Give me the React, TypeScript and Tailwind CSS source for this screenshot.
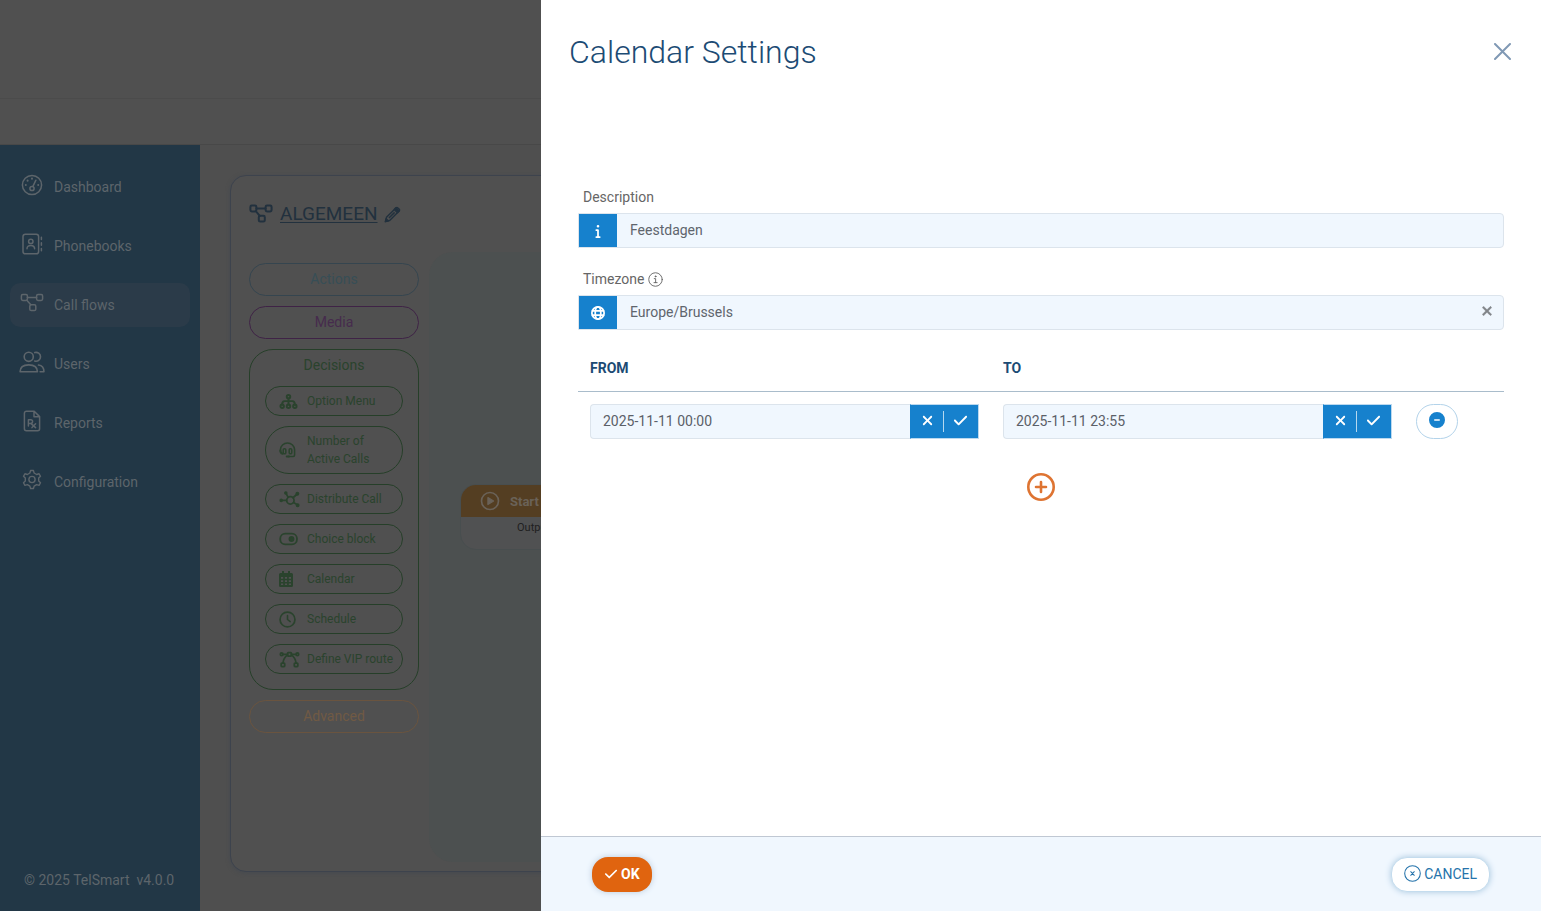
import React, { useState } from 'react';
import { FaCheck, FaCircleMinus, FaInfo, FaXmark } from 'react-icons/fa6';

interface IconProps {
  className?: string;
  children?: React.ReactNode;
}

const LineIcon: React.FC<IconProps> = ({ className = 'h-6 w-6', children }) => (
  <svg
    className={className}
    viewBox="0 0 24 24"
    fill="none"
    stroke="currentColor"
    strokeWidth={1.5}
    strokeLinecap="round"
    strokeLinejoin="round"
    aria-hidden="true"
  >
    {children}
  </svg>
);

const GaugeIcon = () => (
  <LineIcon>
    <circle cx="12" cy="12" r="9.6" />
    <circle cx="12" cy="15.5" r="2.1" />
    <path d="M12.9 13.4l3-6.2" />
    <path d="M12 5.6v.1M7.6 7.6v.1M5.8 12v.1M18.2 12v.1" strokeWidth={2} />
  </LineIcon>
);

const AddressBookIcon = () => (
  <LineIcon>
    <rect x="3" y="2.2" width="15.6" height="19.6" rx="2.4" />
    <circle cx="10.8" cy="9.4" r="2.2" />
    <path d="M7 16.8c0-2.2 1.5-3.4 3.8-3.4s3.8 1.2 3.8 3.4M21.4 5.2v2.4M21.4 10.8v2.4M21.4 16.4v2.4" />
  </LineIcon>
);

const FlowIcon: React.FC<IconProps> = ({ className }) => (
  <LineIcon className={className}>
    <rect x="1.4" y="3.6" width="6" height="5.8" rx="1.4" />
    <rect x="16.6" y="3.6" width="6" height="5.8" rx="1.4" />
    <rect x="9.8" y="13.8" width="6" height="5.8" rx="1.4" />
    <path d="M7.4 6.5h9.2M6.8 9.2l4 4.6" />
  </LineIcon>
);

const UsersIcon = () => (
  <LineIcon className="h-[26px] w-[26px]">
    <circle cx="9" cy="7.2" r="4.2" />
    <path d="M1 21c0-4 3-6.4 8-6.4s8 2.4 8 6.4zM14.5 3.3a4.1 4.1 0 1 1 0 7.8M18 14.8c3.2.4 5 2.6 5 6.2h-3.5" />
  </LineIcon>
);

const ReportIcon = () => (
  <LineIcon>
    <path d="M6.4 2.2h7.8l5.4 5.4v12.2a2 2 0 0 1-2 2H6.4a2 2 0 0 1-2-2V4.2a2 2 0 0 1 2-2zM14 2.4v5.4h5.4" />
    <path d="M8.4 17v-6.2h2.4a1.8 1.8 0 0 1 0 3.6H8.4M10.8 14.4l4.8 4.2M15.6 14.8l-3.6 3.8" />
  </LineIcon>
);

const GearIcon = () => (
  <LineIcon className="h-[22px] w-[22px]">
    <path d="M9.7 4.4l.7-2.7h3.2l.7 2.7 2.7 1.6 2.7-.8 1.6 2.8-2 1.9v3.2l2 1.9-1.6 2.8-2.7-.8-2.7 1.6-.7 2.7h-3.2l-.7-2.7L7 17l-2.7.8L2.7 15l2-1.9V9.9L2.7 8l1.6-2.8L7 6z" />
    <circle cx="12" cy="11.5" r="3.4" />
  </LineIcon>
);

const PencilIcon = () => (
  <svg className="h-[17px] w-[17px]" viewBox="0 0 24 24" fill="none" stroke="currentColor" strokeWidth={2} strokeLinejoin="round" aria-hidden="true">
    <path d="M2 22l1.5-6L16.8 2.7a2 2 0 0 1 2.8 0l1.7 1.7a2 2 0 0 1 0 2.8L8 20.5z" />
    <path d="M14.5 5l4.5 4.5 2.5-2.3-4.7-4.7zM2 22l1-4 3 3zM15 9l-8 8" fill="currentColor" />
  </svg>
);

const SitemapIcon = () => (
  <LineIcon className="h-[19px] w-[19px]">
    <g strokeWidth={2.4}>
      <circle cx="12" cy="6" r="2.2" />
      <circle cx="4" cy="18" r="2.2" />
      <circle cx="12" cy="18" r="2.2" />
      <circle cx="20" cy="18" r="2.2" />
      <path d="M12 8v8M4 16c0-3 1-4.5 3-4.5h10c2 0 3 1.5 3 4.5" />
    </g>
  </LineIcon>
);

const HeadsetIcon = () => (
  <LineIcon className="h-[17px] w-[17px]">
    <g strokeWidth={2.2}>
      <path d="M2 13v-2a10 9.5 0 0 1 20 0v7.5a2 2 0 0 1-2 2h-7" />
      <rect x="6" y="9.5" width="3.6" height="7" rx="1.5" />
      <rect x="14.4" y="9.5" width="3.6" height="7" rx="1.5" />
      <path d="M2 12c0 2.5 1 4 3 4.5M11 20.5h3" strokeWidth={3} />
    </g>
  </LineIcon>
);

const DistributeIcon = () => (
  <LineIcon className="h-[21px] w-[21px]">
    <g strokeWidth={2}>
      <circle cx="13" cy="13" r="4.2" />
      <path d="M2.5 13h6M10.5 9.5L8 5M16 10l4.5-4M16.5 15.5L21 18" />
    </g>
    <g fill="currentColor">
      <circle cx="2.5" cy="13" r="1.3" />
      <circle cx="7.8" cy="4.5" r="1.3" />
      <circle cx="21" cy="5.5" r="1.5" />
      <circle cx="21.3" cy="18.5" r="1.5" />
    </g>
  </LineIcon>
);

const ToggleIcon = () => (
  <LineIcon className="h-5 w-5">
    <rect x="1.5" y="5.5" width="20" height="13" rx="6" strokeWidth={2.2} />
    <circle cx="15" cy="12" r="2.8" fill="currentColor" />
  </LineIcon>
);

const CalendarIcon = () => (
  <svg className="h-4 w-3.5" viewBox="0 0 14 16" fill="currentColor" fillRule="evenodd" aria-hidden="true">
    <path d="M3 0h2v2h4V0h2v2h1.5A1.5 1.5 0 0 1 14 3.5v11a1.5 1.5 0 0 1-1.5 1.5h-11A1.5 1.5 0 0 1 0 14.5v-11A1.5 1.5 0 0 1 1.5 2H3zM2 6v1.7h2.2V6zm3.900 0v1.7h2.200V6zM9.800 6v1.700H12V6zM2 9.200v1.700h2.200V9.200zm3.900 0v1.700h2.200V9.200zm3.900 0v1.700H12V9.200zM2 12.400v1.600h2.200v-1.600zm3.900 0v1.600h2.200v-1.600zm3.900 0v1.600H12v-1.600z" />
  </svg>
);

const ClockIcon = () => (
  <LineIcon className="h-[17px] w-[17px]">
    <circle cx="12" cy="12" r="10.5" strokeWidth={2.4} />
    <path d="M12 6.5V12l3.8 3" strokeWidth={2.2} />
  </LineIcon>
);

const RouteIcon = () => (
  <LineIcon className="h-[21px] w-[21px]">
    <g strokeWidth={2}>
      <circle cx="3" cy="6" r="1.5" />
      <circle cx="21" cy="6" r="1.5" />
      <rect x="9.8" y="4" width="4.4" height="4" rx=".8" />
      <rect x="2.5" y="16" width="4" height="4" rx=".8" />
      <rect x="17.5" y="16" width="4" height="4" rx=".8" />
      <path d="M4.5 6h5.3M14.2 6h5.3M9.8 7C6.5 9 5 11.5 4.5 16M14.2 7c3.3 2 4.8 4.5 5.3 9" />
    </g>
  </LineIcon>
);

const PlayIcon = () => (
  <LineIcon className="h-5 w-5">
    <circle cx="12" cy="12" r="10.2" strokeWidth={2} />
    <path d="M9.5 7.8l6.8 4.2-6.8 4.2z" fill="currentColor" />
  </LineIcon>
);

const GlobeIcon = () => (
  <LineIcon className="h-3.5 w-3.5">
    <g strokeWidth={3}>
      <circle cx="12" cy="12" r="10.5" />
      <ellipse cx="12" cy="12" rx="4.8" ry="10.5" />
      <path d="M2.5 8.5h19M2.5 15.5h19" />
    </g>
  </LineIcon>
);

const InfoCircleIcon = () => (
  <LineIcon className="h-[15px] w-[15px]">
    <circle cx="12" cy="12" r="10.8" />
    <path d="M10 10.6h2.2V17M9.6 17h5" />
    <circle cx="12" cy="7" r=".8" fill="currentColor" />
  </LineIcon>
);

const navItems = [
  { label: 'Dashboard', icon: <GaugeIcon />, active: false },
  { label: 'Phonebooks', icon: <AddressBookIcon />, active: false },
  { label: 'Call flows', icon: <FlowIcon />, active: true },
  { label: 'Users', icon: <UsersIcon />, active: false },
  { label: 'Reports', icon: <ReportIcon />, active: false },
  { label: 'Configuration', icon: <GearIcon />, active: false },
];

const decisions = [
  { label: 'Option Menu', icon: <SitemapIcon /> },
  { label: 'Number of Active Calls', icon: <HeadsetIcon /> },
  { label: 'Distribute Call', icon: <DistributeIcon /> },
  { label: 'Choice block', icon: <ToggleIcon /> },
  { label: 'Calendar', icon: <CalendarIcon /> },
  { label: 'Schedule', icon: <ClockIcon /> },
  { label: 'Define VIP route', icon: <RouteIcon /> },
];

const Sidebar = () => (
  <aside className="flex w-[200px] shrink-0 flex-col justify-between bg-[#223746] px-2.5 pt-5 pb-[21px] text-sm text-[#5d656b]">
    <nav className="flex flex-col gap-[15px]">
      {navItems.map((item) => (
        <a
          key={item.label}
          href="#"
          className={`flex h-11 items-center gap-2 rounded-[10px] px-2 ${item.active ? 'bg-[#2b3b49]' : ''}`}
        >
          <span className="flex w-7 justify-center pb-1">{item.icon}</span>
          {item.label}
        </a>
      ))}
    </nav>
    <p className="px-3.5 whitespace-pre">© 2025 TelSmart  v4.0.0</p>
  </aside>
);

const Palette = () => (
  <div className="flex w-[170px] shrink-0 flex-col gap-2.5 pt-[11px] text-sm">
    <button className="h-[33px] rounded-full border border-[#35454f] pb-0.5 text-[#374e56]">Actions</button>
    <button className="h-[33px] rounded-full border border-[#3f2346] pb-0.5 text-[#462b4d]">Media</button>
    <section className="rounded-[24px] border border-[#263f29] px-[15px] pb-[15px] text-[#2a432d]">
      <h2 className="flex h-9 items-center justify-center pb-1.5">Decisions</h2>
      <div className="flex flex-col gap-2.5">
        {decisions.map((item) => (
          <button
            key={item.label}
            className="flex min-h-[30px] items-center rounded-[24px] border border-[#263f29] py-[5px] pl-[13px] text-left text-xs leading-[18px]"
          >
            <span className="-my-1 flex w-7 shrink-0 items-center">{item.icon}</span>
            <span className={item.label === 'Number of Active Calls' ? 'w-[70px]' : 'whitespace-nowrap'}>{item.label}</span>
          </button>
        ))}
      </div>
    </section>
    <button className="h-[33px] rounded-full border border-[#6a543f] pb-0.5 text-[#705a44]">Advanced</button>
  </div>
);

const StartBlock = () => (
  <div className="absolute top-[232px] left-[31px] w-[180px] overflow-hidden rounded-2xl border border-[#484e4f] bg-[#505152]">
    <div className="flex h-8 items-center gap-2.5 bg-[#543e22] pl-[19px] text-[13px] font-bold text-[#6a6258]">
      <PlayIcon />
      <span className="pt-0.5">Start</span>
    </div>
    <p className="h-8 pt-[3px] pl-14 text-[11px] leading-4 text-[#202020]">Output</p>
  </div>
);

const FlowEditor = () => (
  <main className="flex min-w-0 flex-1 bg-[#4f4f4f] pt-[30px] pr-[30px] pb-[39px] pl-[30px]">
    <div className="flex min-w-0 flex-1 flex-col rounded-2xl border border-[#3d434d] bg-[#505050] pr-[18px] pb-[9px] pl-[18px] shadow-[0_1px_4px_#464a50]">
      <div className="flex h-[76px] items-center gap-2 text-[#22313e]">
        <FlowIcon className="h-6 w-6 stroke-2" />
        <h1 className="-ml-px text-[19px] underline underline-offset-2">ALGEMEEN</h1>
        <button aria-label="Rename call flow" className="-ml-0.5">
          <PencilIcon />
        </button>
      </div>
      <div className="flex flex-1 gap-2.5">
        <Palette />
        <div className="relative min-w-0 flex-1 overflow-hidden rounded-[24px] bg-[#4c5050]">
          <StartBlock />
        </div>
      </div>
    </div>
  </main>
);

interface DateFieldProps {
  label: string;
  initial: string;
}

const DateField: React.FC<DateFieldProps> = ({ label, initial }) => {
  const [value, setValue] = useState(initial);
  return (
    <div className="flex h-[35px]">
      <input
        aria-label={label}
        value={value}
        onChange={(e) => setValue(e.target.value)}
        className="min-w-0 flex-1 rounded-l border border-r-0 border-[#dce4ec] bg-[#f0f7fe] px-3 pb-0.5 text-[#5b6068] outline-none"
      />
      <div className="flex w-[69px] items-center border border-[#bcd9ef] border-l-[#1681cd] bg-[#1681cd] text-white">
        <button aria-label={`Clear ${label}`} className="flex w-8 justify-center pb-0.5" onClick={() => setValue('')}>
          <FaXmark className="h-[15px] w-[15px]" />
        </button>
        <span className="h-[21px] w-px bg-[#b5d8ef]" />
        <button aria-label={`Confirm ${label}`} className="flex w-8 justify-center pb-0.5">
          <FaCheck className="h-[15px] w-[15px]" />
        </button>
      </div>
    </div>
  );
};

const CalendarSettings = () => {
  const [description, setDescription] = useState('Feestdagen');
  const [timezone, setTimezone] = useState('Europe/Brussels');

  return (
    <div
      role="dialog"
      aria-labelledby="drawer-title"
      className="fixed inset-y-0 right-0 flex w-[1000px] max-w-full flex-col bg-white text-sm"
    >
      <header className="flex h-[104px] items-center justify-between pr-[30px] pl-7">
        <h2 id="drawer-title" className="pt-0.5 text-[32px] font-light text-[#1c4b74]">Calendar Settings</h2>
        <button aria-label="Close" className="pb-0.5 text-[#8099b5]">
          <svg className="h-[17px] w-[17px]" viewBox="0 0 17 17" fill="none" stroke="currentColor" strokeWidth={2} strokeLinecap="round">
            <path d="M1 1l15 15M16 1L1 16" />
          </svg>
        </button>
      </header>

      <div className="flex-1 overflow-auto px-[37px] pt-[83px]">
        <label htmlFor="description" className="block px-[5px] text-[#666666]">Description</label>
        <div className="mt-1.5 flex h-[35px] rounded-r border border-[#dce4ec] bg-[#f0f7fe]">
          <span className="flex w-[38px] items-center justify-center bg-[#1681cd] text-white">
            <FaInfo className="h-3.5 w-3.5" />
          </span>
          <input
            id="description"
            value={description}
            onChange={(e) => setDescription(e.target.value)}
            className="min-w-0 flex-1 bg-transparent px-[13px] pb-0.5 text-[#5f656d] outline-none"
          />
        </div>

        <div className="mt-[21px] flex items-center gap-1 px-[5px] text-[#666666]">
          <label htmlFor="timezone">Timezone</label>
          <InfoCircleIcon />
        </div>
        <div className="mt-1.5 flex h-[35px] rounded-r border border-[#dce4ec] bg-[#f0f7fe]">
          <span className="flex w-[38px] items-center justify-center bg-[#1681cd] text-white">
            <GlobeIcon />
          </span>
          <select
            id="timezone"
            value={timezone}
            onChange={(e) => setTimezone(e.target.value)}
            className="min-w-0 flex-1 appearance-none bg-transparent px-[13px] pb-0.5 text-[#5f656d] outline-none"
          >
            <option value="" />
            <option>Europe/Brussels</option>
          </select>
          <button aria-label="Clear timezone" className="px-[9px] pb-1 text-[#808488]" onClick={() => setTimezone('')}>
            <FaXmark className="h-3.5 w-3.5 stroke-[24] stroke-current" />
          </button>
        </div>

        <table className="mt-[15px] w-full table-fixed border-separate border-spacing-0">
          <thead>
            <tr className="h-[47px] text-left text-[#1c4b74]">
              <th className="border-b border-[#a9bccb] px-3 font-bold">FROM</th>
              <th className="border-b border-[#a9bccb] px-3 font-bold">TO</th>
              <th className="w-[100px] border-b border-[#a9bccb]" aria-label="Remove" />
            </tr>
          </thead>
          <tbody>
            <tr>
              <td className="p-3"><DateField label="From" initial="2025-11-11 00:00" /></td>
              <td className="p-3"><DateField label="To" initial="2025-11-11 23:55" /></td>
              <td className="p-3">
                <button
                  aria-label="Remove period"
                  className="flex h-[35px] w-[42px] items-center justify-center rounded-full border border-[#b3d3ea] pb-[3px] text-[#1681cd]"
                >
                  <FaCircleMinus className="h-4 w-4" />
                </button>
              </td>
            </tr>
          </tbody>
        </table>

        <div className="mt-[22px] flex justify-center">
          <button aria-label="Add period" className="text-[#de7432]">
            <svg className="h-7 w-7" viewBox="0 0 28 28" fill="none" stroke="currentColor" strokeWidth={2.6} strokeLinecap="round">
              <circle cx="14" cy="14" r="12.7" />
              <path d="M14 9v10M9 14h10" />
            </svg>
          </button>
        </div>
      </div>

      <footer className="flex h-[75px] items-center justify-between border-t border-[#c0c8d3] bg-[#f0f7fe] px-[51px]">
        <button className="flex h-[35px] items-center gap-[3px] rounded-2xl bg-[#e0640f] px-3 font-bold text-white shadow-[0_0_6px_#b9cbdd]">
          <FaCheck className="h-3.5 w-3.5" />
          OK
        </button>
        <button className="flex h-[35px] items-center gap-[3px] rounded-2xl border border-[#c4dcee] bg-white px-3 text-[#2573ab] shadow-[0_0_6px_#a9c8e0]">
          <LineIcon className="-mt-0.5 h-[17px] w-[17px]">
            <circle cx="12" cy="12" r="11" />
            <path d="M9.5 9.5l5 5M14.5 9.5l-5 5" />
          </LineIcon>
          CANCEL
        </button>
      </footer>
    </div>
  );
};

const App = () => {
  return (
    <div className="flex min-h-screen flex-col bg-[#505050] font-['Roboto',sans-serif]">
      <header>
        <div className="h-[99px] border-b border-[#4b4b4b]" />
        <div className="h-[46px] border-b border-[#484848]" />
      </header>
      <div className="flex flex-1">
        <Sidebar />
        <FlowEditor />
      </div>
      <CalendarSettings />
    </div>
  );
};

export default App;
